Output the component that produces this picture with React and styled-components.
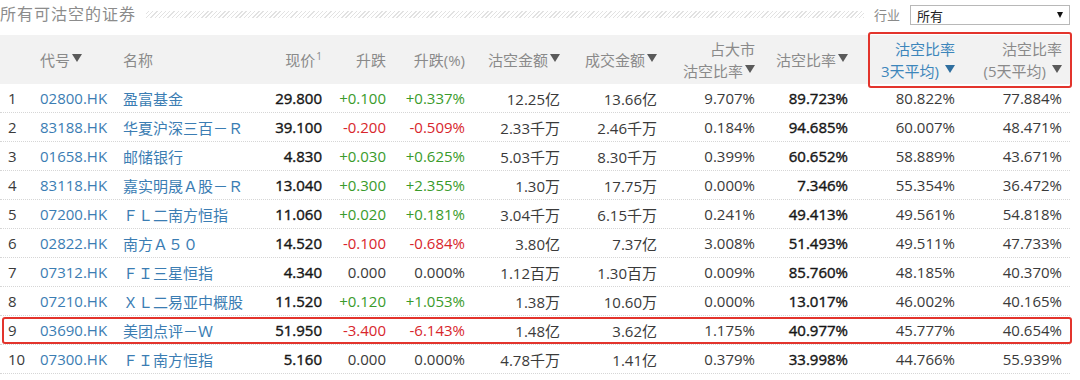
import React from "react";
import styled, { createGlobalStyle, css } from "styled-components";

const GlobalStyle = createGlobalStyle`
  html, body { margin: 0; padding: 0; background: #fff; }
  body {
    font-family: "Open Sans", "Noto Sans CJK SC", sans-serif;
    color: #333;
  }
`;

const COLS = [
  { w: 32, align: "left", pl: 8 },
  { w: 83, align: "left", pl: 8 },
  { w: 145, align: "left", pl: 8 },
  { w: 70, align: "right", pr: 8 },
  { w: 64, align: "right", pr: 8 },
  { w: 79, align: "right", pr: 8 },
  { w: 95, align: "right", pr: 8 },
  { w: 97, align: "right", pr: 8 },
  { w: 98, align: "right", pr: 8 },
  { w: 107, align: "right", pr: 22 },
  { w: 93, align: "right", pr: 8 },
  { w: 107, align: "right", pr: 8 },
];
const TEMPLATE = COLS.map((c) => `${c.w}px`).join(" ");

const Page = styled.div`
  width: 1080px;
  height: 380px;
  overflow: hidden;
`;

const TopBar = styled.div`
  display: flex;
  align-items: center;
  height: 28px;
  width: 1070px;
  margin-bottom: 7px;
`;

const Title = styled.div`
  font-size: 16px;
  letter-spacing: 1px;
  color: #8c8c8c;
  white-space: nowrap;
  margin-top: -2px;
`;

const Hatch = styled.div`
  flex: 1;
  height: 7px;
  margin: 0 10px 0 10px;
  background: repeating-linear-gradient(
    -45deg,
    #e2e2e2 0px,
    #e2e2e2 1px,
    #ffffff 1px,
    #ffffff 3px
  );
`;

const FilterLabel = styled.span`
  font-size: 13px;
  color: #8a8a8a;
  margin-right: 10px;
`;

const Select = styled.div`
  width: 160px;
  height: 20px;
  box-sizing: border-box;
  border: 1px solid #b8b8b8;
  background: #fff;
  display: flex;
  align-items: center;
  justify-content: space-between;
  padding: 0 6px;
  font-size: 13px;
  color: #222;
  margin-top: 2px;
`;

const SelectArrow = styled.span`
  width: 0;
  height: 0;
  border-left: 3px solid transparent;
  border-right: 3px solid transparent;
  border-top: 6px solid #111;
`;

const Table = styled.div`
  width: 1070px;
`;

const HeaderRow = styled.div`
  display: grid;
  grid-template-columns: ${TEMPLATE};
  height: 49px;
  background: #f2f2f2;
`;

const HeaderGroup = styled.div`
  grid-column: span 2;
  display: grid;
  grid-template-columns: 93px 107px;
  position: relative;
  &::after {
    content: "";
    position: absolute;
    top: -3px;
    bottom: -4px;
    left: -2px;
    right: -2px;
    border: 2px solid #e3342c;
    border-radius: 3px;
    pointer-events: none;
  }
`;

const HeadCell = styled.div`
  display: flex;
  flex-direction: column;
  justify-content: center;
  align-items: ${(p) => (p.$align === "right" ? "flex-end" : "flex-start")};
  padding-left: ${(p) => p.$pl || 0}px;
  padding-right: ${(p) => p.$pr || 0}px;
  font-size: 15px;
  line-height: 22px;
  color: ${(p) => (p.$active ? "#3d86bb" : "#8a8a8a")};
  white-space: nowrap;
  overflow: hidden;
`;

const HeadLine = styled.span`
  display: inline-flex;
  align-items: flex-start;
`;

const SortArrow = styled.span`
  display: inline-block;
  width: 0;
  height: 0;
  margin-left: ${(p) => (p.$gap ? 6 : 2)}px;
  margin-top: 5px;
  border-left: 5px solid transparent;
  border-right: 5px solid transparent;
  border-top: 8px solid ${(p) => (p.$active ? "#2f6f9f" : "#5a5a5a")};
`;

const Sup = styled.sup`
  font-size: 10px;
  line-height: 0;
  margin-left: 1px;
`;

const Row = styled.div`
  display: grid;
  grid-template-columns: ${TEMPLATE};
  height: 28px;
  border-bottom: 1px dotted #d6d6d6;
  position: relative;
  ${(p) =>
    p.$highlight &&
    css`
      &::after {
        content: "";
        position: absolute;
        top: 1px;
        bottom: 0px;
        left: 2px;
        right: -2px;
        border: 2px solid #e3342c;
        border-radius: 3px;
        pointer-events: none;
      }
    `}
`;

const toneColor = {
  link: "#3b7db3",
  up: "#3a9b2b",
  down: "#d8262c",
  strong: "#161616",
  plain: "#3a3a3a",
};

const Cell = styled.div`
  display: flex;
  align-items: center;
  justify-content: ${(p) => (p.$align === "right" ? "flex-end" : "flex-start")};
  padding-left: ${(p) => p.$pl || 0}px;
  padding-right: ${(p) => p.$pr || 0}px;
  font-size: 15px;
  color: ${(p) => toneColor[p.$tone] || toneColor.plain};
  -webkit-text-stroke: ${(p) => (p.$tone === "strong" ? "0.4px #161616" : "0")};
  white-space: nowrap;
  overflow: hidden;
`;

const rows = [
  ["1", "02800.HK", "盈富基金", "29.800", "+0.100", "+0.337%", "12.25亿", "13.66亿", "9.707%", "89.723%", "80.822%", "77.884%"],
  ["2", "83188.HK", "华夏沪深三百－Ｒ", "39.100", "-0.200", "-0.509%", "2.33千万", "2.46千万", "0.184%", "94.685%", "60.007%", "48.471%"],
  ["3", "01658.HK", "邮储银行", "4.830", "+0.030", "+0.625%", "5.03千万", "8.30千万", "0.399%", "60.652%", "58.889%", "43.671%"],
  ["4", "83118.HK", "嘉实明晟Ａ股－Ｒ", "13.040", "+0.300", "+2.355%", "1.30万", "17.75万", "0.000%", "7.346%", "55.354%", "36.472%"],
  ["5", "07200.HK", "ＦＬ二南方恒指", "11.060", "+0.020", "+0.181%", "3.04千万", "6.15千万", "0.241%", "49.413%", "49.561%", "54.818%"],
  ["6", "02822.HK", "南方Ａ５０", "14.520", "-0.100", "-0.684%", "3.80亿", "7.37亿", "3.008%", "51.493%", "49.511%", "47.733%"],
  ["7", "07312.HK", "ＦＩ三星恒指", "4.340", "0.000", "0.000%", "1.12百万", "1.30百万", "0.009%", "85.760%", "48.185%", "40.370%"],
  ["8", "07210.HK", "ＸＬ二易亚中概股", "11.520", "+0.120", "+1.053%", "1.38万", "10.60万", "0.000%", "13.017%", "46.002%", "40.165%"],
  ["9", "03690.HK", "美团点评－Ｗ", "51.950", "-3.400", "-6.143%", "1.48亿", "3.62亿", "1.175%", "40.977%", "45.777%", "40.654%"],
  ["10", "07300.HK", "ＦＩ南方恒指", "5.160", "0.000", "0.000%", "4.78千万", "1.41亿", "0.379%", "33.998%", "44.766%", "55.939%"],
];

const changeTone = (v) => (v.startsWith("+") ? "up" : v.startsWith("-") ? "down" : "plain");

const toneFor = (i, v) => {
  if (i === 1 || i === 2) return "link";
  if (i === 3 || i === 9) return "strong";
  if (i === 4 || i === 5) return changeTone(v);
  return "plain";
};

const Head = ({ col, lines, arrow, active, gap }) => {
  const c = COLS[col];
  return (
    <HeadCell $align={c.align} $pl={c.pl} $pr={c.pr} $active={active}>
      {lines.map((l, i) => (
        <HeadLine key={i}>
          {l}
          {arrow && i === lines.length - 1 && <SortArrow $active={active} $gap={gap} />}
        </HeadLine>
      ))}
    </HeadCell>
  );
};

export default function App() {
  return (
    <Page>
      <GlobalStyle />
      <TopBar>
        <Title>所有可沽空的证券</Title>
        <Hatch />
        <FilterLabel>行业</FilterLabel>
        <Select>
          <span>所有</span>
          <SelectArrow />
        </Select>
      </TopBar>
      <Table>
        <HeaderRow>
          <Head col={0} lines={[""]} />
          <Head col={1} lines={["代号"]} arrow />
          <Head col={2} lines={["名称"]} />
          <Head
            col={3}
            lines={[
              <span key="p">
                现价<Sup>1</Sup>
              </span>,
            ]}
          />
          <Head col={4} lines={["升跌"]} />
          <Head col={5} lines={["升跌(%)"]} />
          <Head col={6} lines={["沽空金额"]} arrow />
          <Head col={7} lines={["成交金额"]} arrow />
          <Head col={8} lines={["占大市", "沽空比率"]} arrow />
          <Head col={9} lines={["沽空比率"]} arrow />
          <HeaderGroup>
            <Head col={10} lines={["沽空比率", "3天平均)"]} arrow active gap />
            <Head col={11} lines={["沽空比率", "(5天平均)"]} arrow gap />
          </HeaderGroup>
        </HeaderRow>
        {rows.map((r) => (
          <Row key={r[0]} $highlight={r[0] === "9"}>
            {r.map((v, i) => (
              <Cell
                key={i}
                $align={COLS[i].align}
                $pl={COLS[i].pl}
                $pr={COLS[i].pr}
                $tone={toneFor(i, v)}
              >
                {v}
              </Cell>
            ))}
          </Row>
        ))}
      </Table>
    </Page>
  );
}
